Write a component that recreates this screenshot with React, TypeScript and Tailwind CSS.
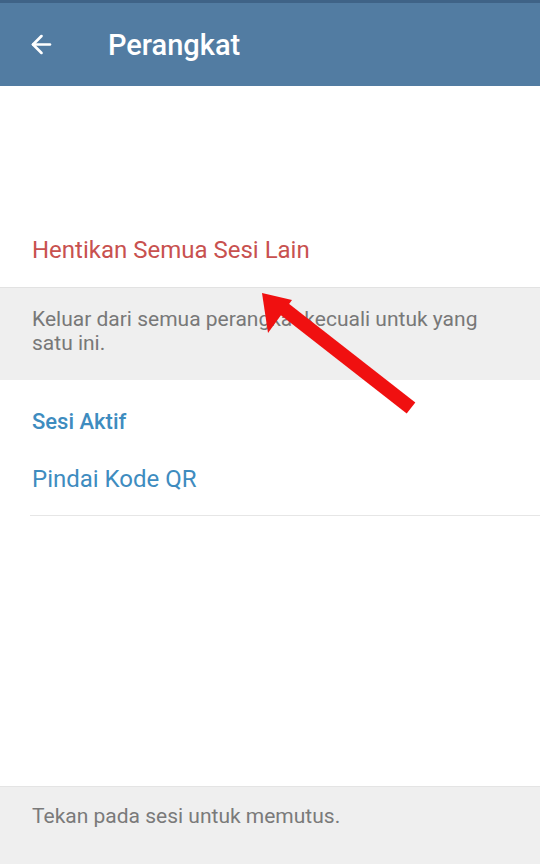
import { ArrowLeft } from "lucide-react"

export default function App() {
  return (
    <div
      className="relative h-[864px] w-[540px] overflow-hidden bg-white"
      style={{ fontFamily: "Roboto, 'Noto Sans', sans-serif" }}
    >
      <div className="h-[3px] bg-[#3f6387]" />
      <header className="flex h-[83px] items-center bg-[#527ca2]">
        <ArrowLeft className="ml-[27px] h-[29px] w-[29px] text-white" strokeWidth={2.2} />
        <h1 className="ml-[52px] text-[29px] font-medium leading-[34px] text-white">Perangkat</h1>
      </header>

      <div className="flex h-[201px] items-end pb-[23px] pl-[32px]">
        <span className="text-[24px] leading-[28px] text-[#c8514f]">Hentikan Semua Sesi Lain</span>
      </div>

      <div className="h-[93px] border-t border-[#e2e2e2] bg-[#efefef] pl-[32px] pr-[40px] pt-[19px] text-[21px] leading-[24px] text-[#787878]">
        Keluar dari semua perangkat kecuali untuk yang satu ini.
      </div>

      <div className="pt-[28px]">
        <div className="pl-[32px] text-[22px] font-medium leading-[28px] text-[#3e8cbf]">Sesi Aktif</div>
        <div className="mt-[29px] pl-[32px] text-[24px] leading-[28px] text-[#3e8cbf]">Pindai Kode QR</div>
        <div className="ml-[30px] mt-[22px] h-px bg-[#e6e6e6]" />
      </div>

      <div className="absolute bottom-0 left-0 right-0 h-[78px] border-t border-[#e4e4e4] bg-[#efefef] pl-[32px] pt-[17px] text-[21px] leading-[24px] text-[#7a7a7a]">
        Tekan pada sesi untuk memutus.
      </div>

      <svg className="absolute left-0 top-0" width="540" height="864" viewBox="0 0 540 864">
        <line x1="411" y1="408" x2="283" y2="308" stroke="#f01010" strokeWidth="14" />
        <polygon points="262,293 292,300 268,333" fill="#f01010" />
      </svg>
    </div>
  )
}
